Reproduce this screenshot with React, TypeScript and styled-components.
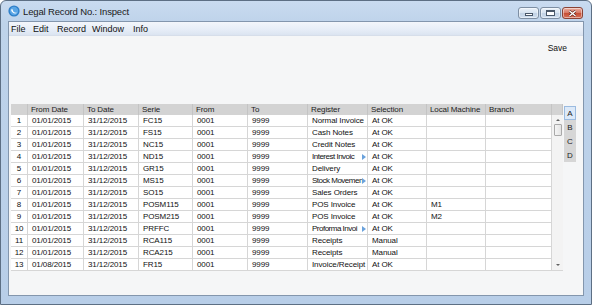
import * as React from "react";
import styled, { createGlobalStyle } from "styled-components";

const GlobalStyle = createGlobalStyle`
  html, body {
    margin: 0;
    padding: 0;
    background: #ffffff;
  }
  body {
    font-family: "Liberation Sans", Arial, sans-serif;
  }
`;

const columns = [
  { key: "no", title: "", width: 17 },
  { key: "fromDate", title: "From Date", width: 56 },
  { key: "toDate", title: "To Date", width: 55 },
  { key: "serie", title: "Serie", width: 54 },
  { key: "from", title: "From", width: 55 },
  { key: "to", title: "To", width: 60 },
  { key: "register", title: "Register", width: 60 },
  { key: "selection", title: "Selection", width: 59 },
  { key: "machine", title: "Local Machine", width: 59 },
  { key: "branch", title: "Branch", width: 66 },
];

const scrollWidth = 11;
const gridTemplate = columns.map((c) => `${c.width}px`).join(" ") + ` ${scrollWidth}px`;

interface Row {
  fromDate: string;
  serie: string;
  register: string;
  clipped?: boolean;
  selection: string;
  machine?: string;
}

// register names the grid shows cut, as on screen
const rows: Row[] = [
  { fromDate: "01/01/2015", serie: "FC15", register: "Normal Invoice", selection: "At OK" },
  { fromDate: "01/01/2015", serie: "FS15", register: "Cash Notes", selection: "At OK" },
  { fromDate: "01/01/2015", serie: "NC15", register: "Credit Notes", selection: "At OK" },
  { fromDate: "01/01/2015", serie: "ND15", register: "Interest Invoic", clipped: true, selection: "At OK" },
  { fromDate: "01/01/2015", serie: "GR15", register: "Delivery", selection: "At OK" },
  { fromDate: "01/01/2015", serie: "MS15", register: "Stock Movemen", clipped: true, selection: "At OK" },
  { fromDate: "01/01/2015", serie: "SO15", register: "Sales Orders", selection: "At OK" },
  { fromDate: "01/01/2015", serie: "POSM115", register: "POS Invoice", selection: "At OK", machine: "M1" },
  { fromDate: "01/01/2015", serie: "POSM215", register: "POS Invoice", selection: "At OK", machine: "M2" },
  { fromDate: "01/01/2015", serie: "PRFFC", register: "Proforma Invoi", clipped: true, selection: "At OK" },
  { fromDate: "01/01/2015", serie: "RCA115", register: "Receipts", selection: "Manual" },
  { fromDate: "01/01/2015", serie: "RCA215", register: "Receipts", selection: "Manual" },
  { fromDate: "01/08/2015", serie: "FR15", register: "Invoice/Receipt", selection: "At OK" },
];

const Window = styled.div`
  width: 592px;
  height: 305px;
  box-sizing: border-box;
  border: 1px solid #5d6f84;
  border-radius: 6px 6px 0 0;
  background: linear-gradient(180deg, #c9dbf0 0px, #bed3ea 22px, #b8cee8 100%);
  display: flex;
  flex-direction: column;
  overflow: hidden;
`;

const TitleBar = styled.div`
  height: 20px;
  display: flex;
  align-items: center;
  padding: 0 7px 0 7px;
  flex-shrink: 0;
`;

const AppIcon = styled.svg`
  width: 12px;
  height: 12px;
  margin-right: 3px;
  flex-shrink: 0;
`;

const Title = styled.div`
  font-family: "Liberation Sans", Arial, sans-serif;
  font-size: 9.5px;
  letter-spacing: -0.15px;
  color: #1a1a1a;
  flex: 1;
  margin-top: 1px;
`;

const CaptionButtons = styled.div`
  display: flex;
  gap: 1px;
  align-self: flex-start;
  margin-top: 6px;
  margin-right: 1px;
`;

const CaptionButton = styled.div<{ $close?: boolean }>`
  width: 21px;
  height: 12px;
  box-sizing: border-box;
  border: 1px solid ${(p) => (p.$close ? "#8a4336" : "#7d8ea3")};
  border-radius: 3px;
  background: ${(p) =>
    p.$close
      ? "linear-gradient(180deg, #eab0a3 0%, #d97b68 45%, #c75037 55%, #d87059 100%)"
      : "linear-gradient(180deg, #eaf1f9 0%, #d8e4f1 45%, #c3d3e6 55%, #cfdeef 100%)"};
  display: flex;
  align-items: center;
  justify-content: center;
  box-shadow: inset 0 0 0 1px rgba(255, 255, 255, 0.45);
`;

const MinGlyph = styled.div`
  width: 8px;
  height: 3px;
  margin-top: 3px;
  box-sizing: border-box;
  border: 1px solid #4a586a;
  background: #ffffff;
`;

const MaxGlyph = styled.div`
  width: 9px;
  height: 6px;
  box-sizing: border-box;
  border: 1px solid #4a586a;
  border-top-width: 2px;
  background: #ffffff;
`;

const Client = styled.div`
  flex: 1;
  margin: 0 7px 8px 7px;
  border: 1px solid #8396ad;
  display: flex;
  flex-direction: column;
  background: #f5f6f7;
`;

const MenuBar = styled.div`
  height: 13px;
  display: flex;
  align-items: center;
  padding-left: 2px;
  background: linear-gradient(180deg, #f3f6fb 0%, #e6edf7 60%, #dbe4f1 100%);
  border-bottom: 1px solid #d6deea;
  flex-shrink: 0;
`;

const MenuItem = styled.span<{ $w: number }>`
  width: ${(p) => p.$w}px;
  font-size: 9px;
  color: #111;
`;

const Content = styled.div`
  flex: 1;
  display: flex;
  flex-direction: column;
`;

const ActionRow = styled.div`
  height: 22px;
  display: flex;
  justify-content: flex-end;
  align-items: center;
  padding-right: 16px;
  padding-top: 1px;
`;

const ActionButton = styled.span`
  font-size: 8.5px;
  color: #111;
`;

const TableArea = styled.div`
  display: flex;
  align-items: flex-start;
  margin-top: 45px;
  padding-left: 2px;
`;

const Grid = styled.div`
  display: grid;
  grid-template-columns: ${gridTemplate};
  grid-auto-rows: 12px;
  grid-template-rows: 11px;
  background: #ffffff;
  font-size: 8px;
  letter-spacing: -0.1px;
  color: #111;
`;

const HeaderCell = styled.div`
  background: #d3d3d3;
  border-right: 1px solid #c4c4c4;
  padding-left: 3px;
  line-height: 11px;
  white-space: nowrap;
  overflow: hidden;
  color: #222;
`;

const Cell = styled.div<{ $center?: boolean }>`
  position: relative;
  border-right: 1px solid #d6d6d6;
  border-bottom: 1px solid #d6d6d6;
  padding-left: ${(p) => (p.$center ? 0 : 4)}px;
  text-align: ${(p) => (p.$center ? "center" : "left")};
  line-height: 11px;
  white-space: nowrap;
  overflow: hidden;
`;

const CellText = styled.span<{ $clipped?: boolean }>`
  display: block;
  overflow: hidden;
  white-space: nowrap;
  margin-right: ${(p) => (p.$clipped ? 4 : 0)}px;
  letter-spacing: ${(p) => (p.$clipped ? "-0.5px" : "inherit")};
`;

const ClipArrow = styled.span`
  position: absolute;
  right: 1px;
  top: 3px;
  width: 0;
  height: 0;
  border-top: 3px solid transparent;
  border-bottom: 3px solid transparent;
  border-left: 4px solid #6aa2dc;
`;

const ScrollBar = styled.div`
  grid-column: ${columns.length + 1};
  grid-row: 2 / span ${rows.length};
  background: #f3f3f3;
  display: flex;
  flex-direction: column;
  align-items: center;
  border-bottom: 1px solid #d6d6d6;
`;

const ScrollArrow = styled.div<{ $down?: boolean }>`
  width: 0;
  height: 0;
  margin-top: ${(p) => (p.$down ? "auto" : "4px")};
  margin-bottom: ${(p) => (p.$down ? "4px" : "0")};
  border-left: 2px solid transparent;
  border-right: 2px solid transparent;
  ${(p) =>
    p.$down ? "border-top: 2px solid #606060;" : "border-bottom: 2px solid #606060;"}
`;

const ScrollThumb = styled.div`
  width: 8px;
  height: 12px;
  margin-top: 3px;
  box-sizing: border-box;
  border: 1px solid #a9a9a9;
  border-radius: 1px;
  background: linear-gradient(90deg, #f4f4f4, #e4e4e4);
`;

const Tabs = styled.div`
  display: flex;
  flex-direction: column;
  margin-left: 1px;
  margin-top: 2px;
`;

const Tab = styled.div<{ $active?: boolean }>`
  width: 12px;
  height: 14px;
  box-sizing: border-box;
  display: flex;
  align-items: center;
  justify-content: center;
  font-size: 8px;
  color: #222;
  background: ${(p) => (p.$active ? "#dce9f8" : "#d6d6d6")};
  border: 1px solid ${(p) => (p.$active ? "#9bbbe0" : "#d6d6d6")};
`;

export default function App() {
  return (
    <>
      <GlobalStyle />
      <Window>
        <TitleBar>
          <AppIcon viewBox="0 0 12 12">
            <circle cx="6" cy="6" r="5.6" fill="#2f7fc8" />
            <circle cx="6" cy="6" r="4.2" fill="#5aa6e6" />
            <path d="M3 4.5 C3.5 8, 7 9.5, 9.5 7.5 C7 8.2, 4.8 7.2, 4.6 4.2 Z" fill="#ffffff" />
          </AppIcon>
          <Title>Legal Record No.: Inspect</Title>
          <CaptionButtons>
            <CaptionButton>
              <MinGlyph />
            </CaptionButton>
            <CaptionButton>
              <MaxGlyph />
            </CaptionButton>
            <CaptionButton $close>
              <svg width="9" height="7" viewBox="0 0 9 7">
                <path d="M1.5 1 L7.5 6 M7.5 1 L1.5 6" stroke="#5a2219" strokeWidth="2.6" />
                <path d="M1.5 1 L7.5 6 M7.5 1 L1.5 6" stroke="#ffffff" strokeWidth="1.4" />
              </svg>
            </CaptionButton>
          </CaptionButtons>
        </TitleBar>
        <Client>
          <MenuBar>
            <MenuItem $w={22}>File</MenuItem>
            <MenuItem $w={24}>Edit</MenuItem>
            <MenuItem $w={35}>Record</MenuItem>
            <MenuItem $w={41}>Window</MenuItem>
            <MenuItem $w={20}>Info</MenuItem>
          </MenuBar>
          <Content>
            <ActionRow>
              <ActionButton>Save</ActionButton>
            </ActionRow>
            <TableArea>
              <Grid>
                {columns.map((c) => (
                  <HeaderCell key={c.key}>{c.title}</HeaderCell>
                ))}
                <HeaderCell />
                {rows.map((r, i) => (
                  <React.Fragment key={i}>
                    <Cell $center>{i + 1}</Cell>
                    <Cell>{r.fromDate}</Cell>
                    <Cell>31/12/2015</Cell>
                    <Cell>{r.serie}</Cell>
                    <Cell>0001</Cell>
                    <Cell>9999</Cell>
                    <Cell>
                      <CellText $clipped={r.clipped}>{r.register}</CellText>
                      {r.clipped && <ClipArrow />}
                    </Cell>
                    <Cell>{r.selection}</Cell>
                    <Cell>{r.machine ?? ""}</Cell>
                    <Cell />
                  </React.Fragment>
                ))}
                <ScrollBar>
                  <ScrollArrow />
                  <ScrollThumb />
                  <ScrollArrow $down />
                </ScrollBar>
              </Grid>
              <Tabs>
                <Tab $active>A</Tab>
                <Tab>B</Tab>
                <Tab>C</Tab>
                <Tab>D</Tab>
              </Tabs>
            </TableArea>
          </Content>
        </Client>
      </Window>
    </>
  );
}
